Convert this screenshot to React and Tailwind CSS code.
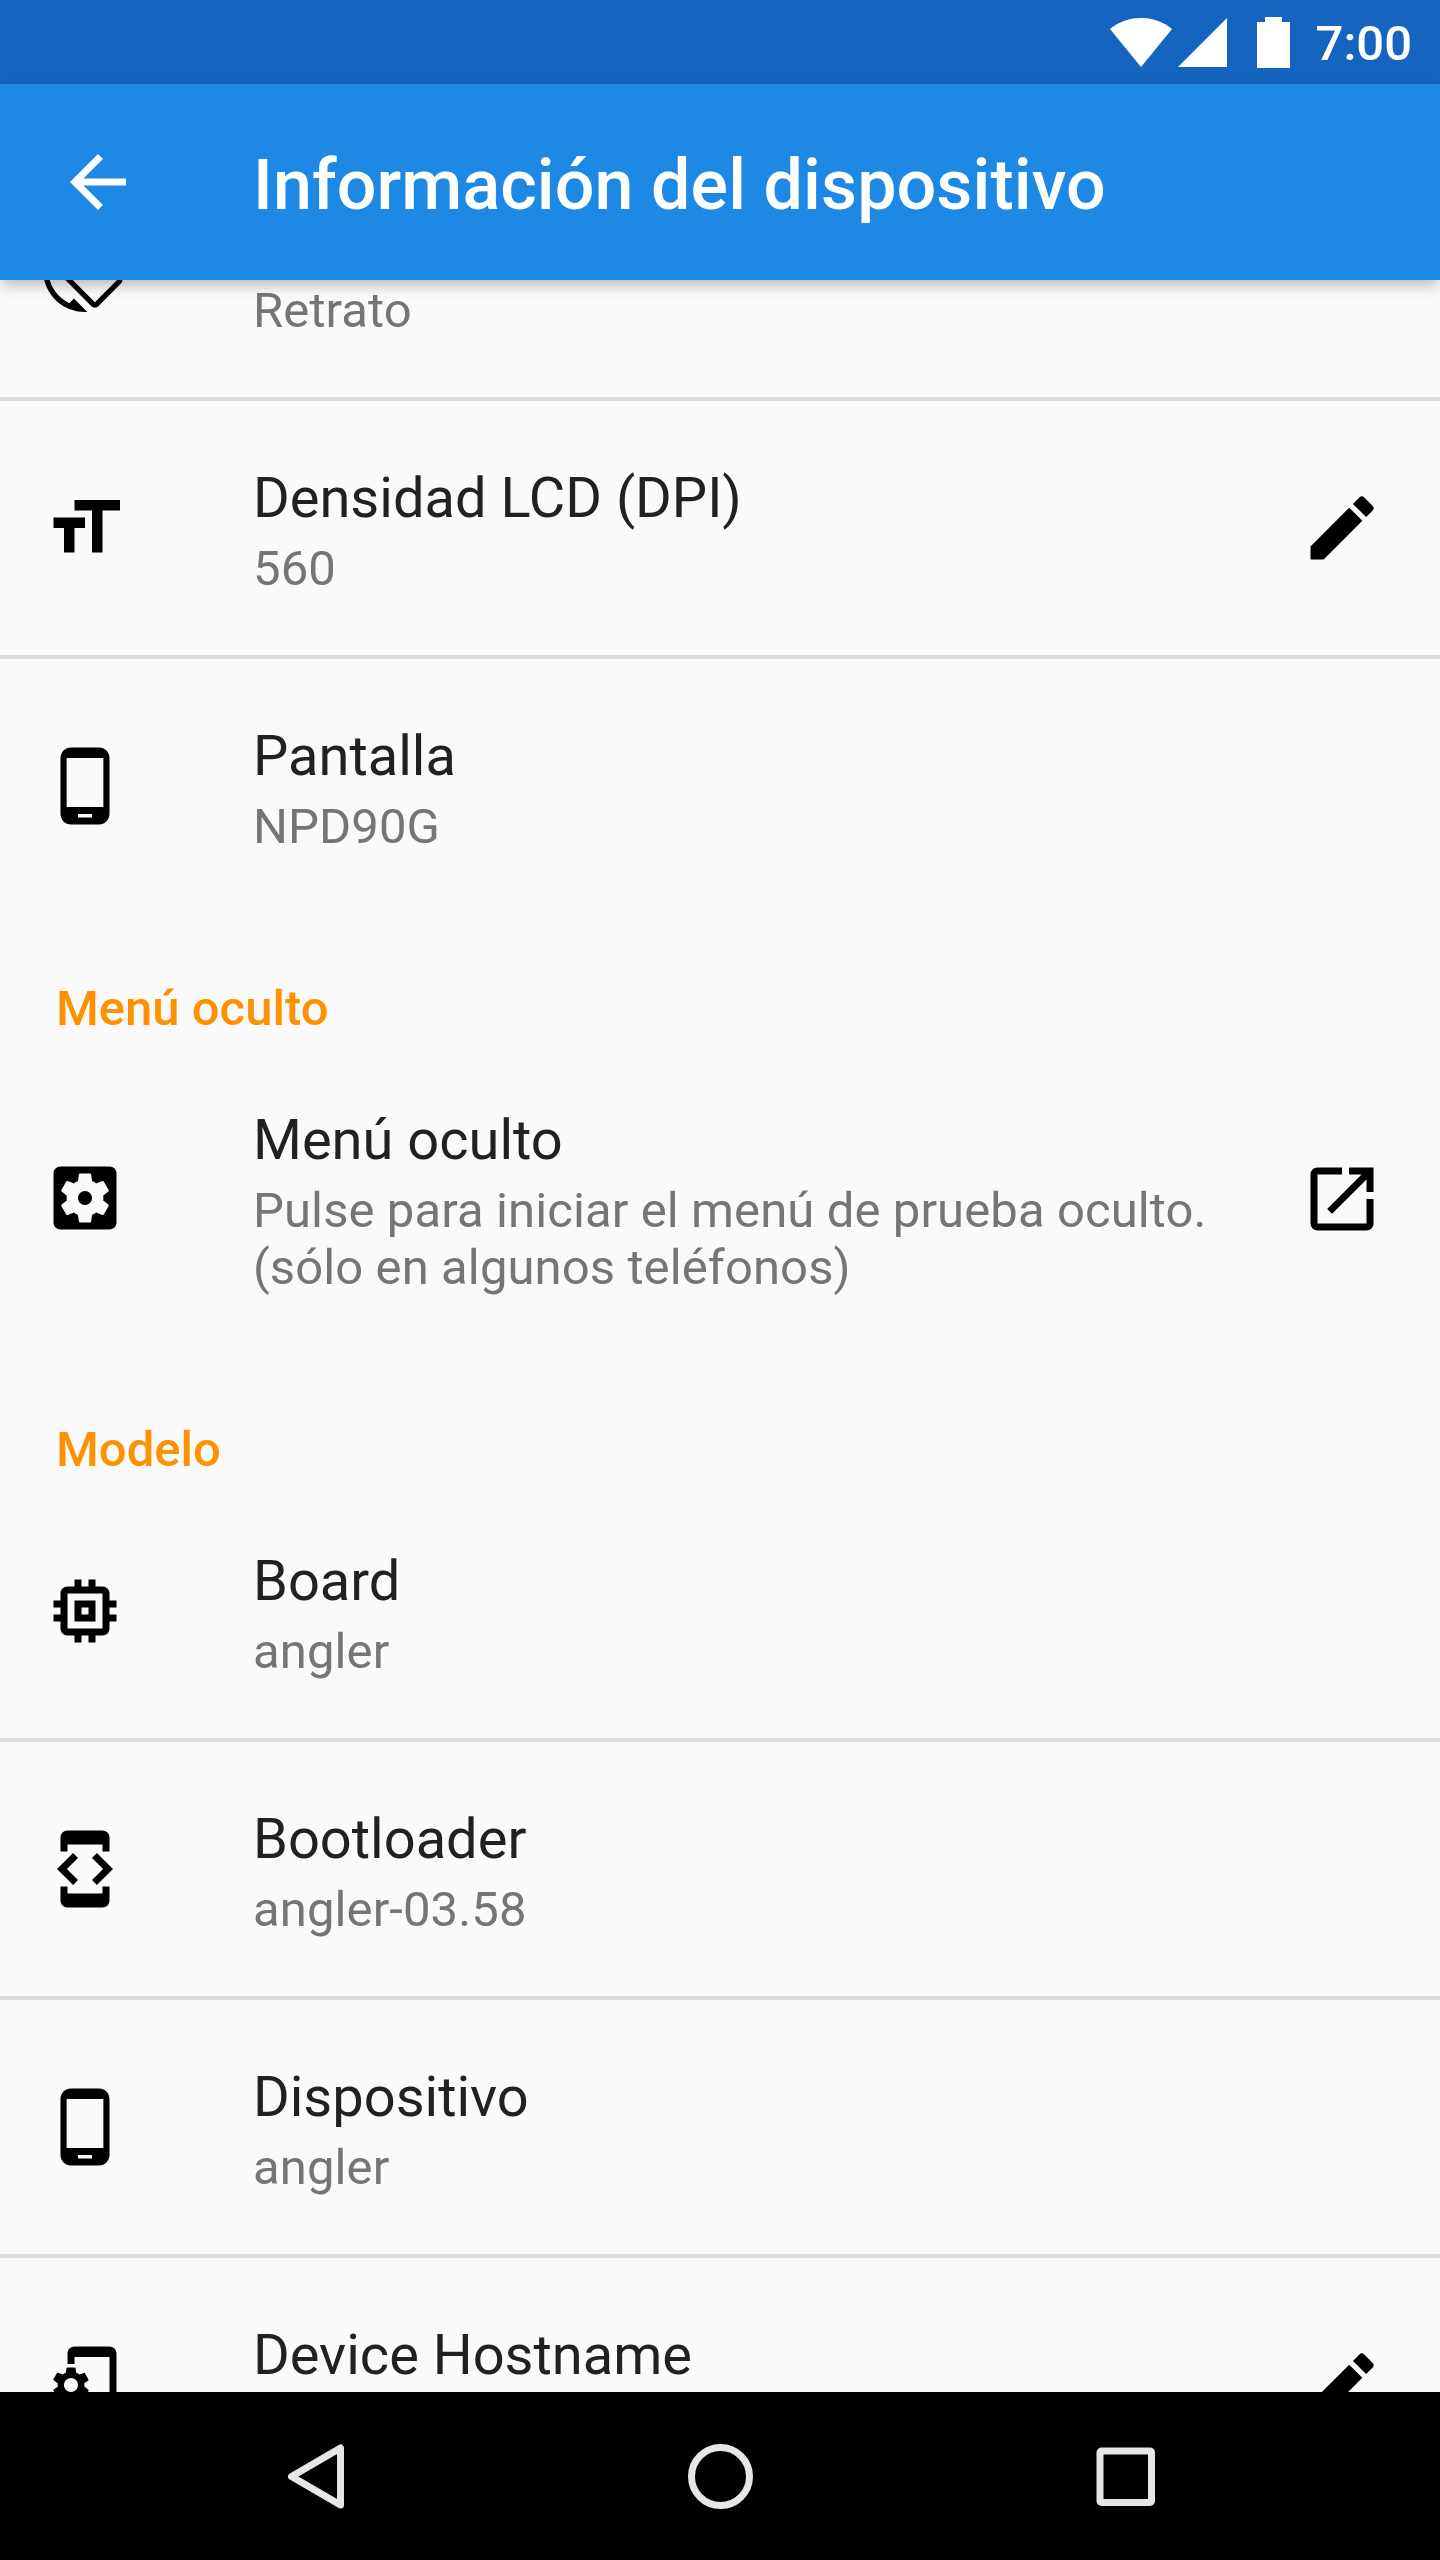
import {
  MdArrowBack,
  MdDeveloperMode,
  MdFormatSize,
  MdMemory,
  MdModeEdit,
  MdOpenInNew,
  MdPhoneAndroid,
  MdScreenRotation,
} from 'react-icons/md';

function SettingsTileIcon({ className }) {
  return (
    <svg viewBox="0 0.280 24 24" fill="currentColor" className={className}>
      <path d="M12 10c-1.1 0-2 .9-2 2s.9 2 2 2 2-.9 2-2-.9-2-2-2zm7-7H5c-1.11 0-2 .9-2 2v14c0 1.1.89 2 2 2h14c1.11 0 2-.9 2-2V5c0-1.1-.89-2-2-2zm-1.75 9c0 .23-.02.46-.05.68l1.48 1.16c.13.11.17.3.08.45l-1.4 2.42c-.09.15-.27.21-.43.15l-1.74-.7c-.36.28-.76.51-1.18.69l-.26 1.85c-.03.17-.18.3-.35.3h-2.8c-.17 0-.32-.13-.35-.29l-.26-1.85c-.43-.18-.82-.41-1.18-.69l-1.74.7c-.16.06-.34 0-.43-.15l-1.4-2.42c-.09-.15-.05-.34.08-.45l1.48-1.16c-.03-.23-.05-.46-.05-.69 0-.23.02-.46.05-.68l-1.48-1.16c-.13-.11-.17-.3-.08-.45l1.4-2.42c.09-.15.27-.21.43-.15l1.74.7c.36-.28.76-.51 1.18-.69l.26-1.85c.03-.17.18-.3.35-.3h2.8c.17 0 .32.13.35.29l.26 1.85c.43.18.82.41 1.18.69l1.74-.7c.16-.06.34 0 .43.15l1.4 2.42c.09.15.05.34-.08.45l-1.48 1.16c.03.23.05.46.05.69z" />
    </svg>
  );
}

function PhoneSetupIcon({ className }) {
  return (
    <svg viewBox="0 0 24 24" fill="currentColor" className={className}>
      <path d="M11.8 12.5v-1l1.1-.8c.1-.1.1-.2.1-.3l-1-1.7c-.1-.2-.2-.2-.3-.1l-1.3.4c-.3-.2-.6-.4-.9-.5l-.2-1.3c0-.1-.1-.2-.3-.2H7c-.1 0-.2.1-.3.2l-.2 1.3c-.3.1-.6.3-.9.5l-1.3-.5c-.1 0-.2 0-.3.1l-1 1.7c-.1.2 0 .3.1.4l1.1.8v1l-1.1.8c-.2 0-.2.1-.1.3l1 1.7c.1.2.2.2.3.1l1.4-.4c.3.2.6.4.9.5l.2 1.3c-.1.1.1.2.2.2h2c.1 0 .2-.1.3-.2l.2-1.3c.3-.1.6-.3.9-.5l1.3.5c.1 0 .2 0 .3-.1l1-1.7c.1-.2 0-.3-.1-.4l-1.1-.9zM8 14c-1.1 0-2-.9-2-2s.9-2 2-2 2 .9 2 2-.9 2-2 2zM19 1H9c-1.1 0-2 .9-2 2v3h2V4h10v16H9v-2H7v3c0 1.1.9 2 2 2h10c1.1 0 2-.9 2-2V3c0-1.1-.9-2-2-2z" />
    </svg>
  );
}

const displayItems = [
  { title: '', lines: ['Retrato'], icon: MdScreenRotation },
  { title: 'Densidad LCD (DPI)', lines: ['560'], icon: MdFormatSize, action: MdModeEdit },
  { title: 'Pantalla', lines: ['NPD90G'], icon: MdPhoneAndroid },
];

const hiddenMenuItems = [
  {
    title: 'Menú oculto',
    lines: ['Pulse para iniciar el menú de prueba oculto.', '(sólo en algunos teléfonos)'],
    icon: SettingsTileIcon,
    action: MdOpenInNew,
  },
];

const modelItems = [
  { title: 'Board', lines: ['angler'], icon: MdMemory },
  { title: 'Bootloader', lines: ['angler-03.58'], icon: MdDeveloperMode },
  { title: 'Dispositivo', lines: ['angler'], icon: MdPhoneAndroid },
  { title: 'Device Hostname', lines: [], icon: PhoneSetupIcon, action: MdModeEdit },
];

function StatusBar() {
  return (
    <div className="flex h-[84px] shrink-0 items-center justify-end bg-[#1565c0] pr-[28px] text-white">
      <svg viewBox="0 0 62 49" className="h-[49px] w-[62px]" fill="currentColor">
        <path d="M0 11C18-3.700 44-3.700 62 11L31 49z" />
      </svg>
      <svg viewBox="0 0 49 49" className="ml-[6px] h-[49px] w-[49px]" fill="currentColor">
        <path d="M0 49H49V0z" />
      </svg>
      <svg viewBox="0 0 33 51" className="ml-[30px] h-[51px] w-[33px]" fill="currentColor">
        <path d="M8 0h17v5h8v46H0V5h8z" />
      </svg>
      <span className="ml-[26px] pt-[4px] text-[49px] leading-[58px] font-medium">7:00</span>
    </div>
  );
}

function AppBar() {
  return (
    <header className="z-10 flex h-[196px] shrink-0 items-center bg-[#1e88e5] text-white shadow-[0_6px_14px_-2px_rgba(0,0,0,0.3)]">
      <div className="w-[253px] shrink-0 pl-[56px]">
        <MdArrowBack className="h-[84px] w-[84px]" />
      </div>
      <h1 className="pt-[6px] text-[70px] leading-[82px] font-medium tracking-[0.08px] whitespace-nowrap">
        Información del dispositivo
      </h1>
    </header>
  );
}

function SectionTitle({ children }) {
  return (
    <h2 className="flex h-[130px] items-end px-[56px] pb-[6px] text-[49px] leading-[57px] font-medium text-[#ff9100]">
      {children}
    </h2>
  );
}

function Item({ item }) {
  const Icon = item.icon;
  const Action = item.action;

  return (
    <li className="flex items-center pr-[56px]">
      <div className="w-[253px] shrink-0 pl-[43px]">
        <Icon className="h-[84px] w-[84px] text-black" />
      </div>
      <div className="min-h-[254px] flex-1 pt-[64px] pb-[58px]">
        <p className="h-[67px] text-[56px] leading-[67px] text-[#212121]">{item.title}</p>
        <div className="mt-[8px] text-[49px] leading-[57px] tracking-[0.1px] whitespace-nowrap text-[#757575]">
          {item.lines.map((line) => (
            <p key={line}>{line}</p>
          ))}
        </div>
      </div>
      {Action ? <Action className="h-[84px] w-[84px] shrink-0 text-black" /> : null}
    </li>
  );
}

function ItemList({ items }) {
  return (
    <ul className="divide-y-4 divide-[#dcdcdc]">
      {items.map((item) => (
        <Item key={item.title} item={item} />
      ))}
    </ul>
  );
}

function NavBar() {
  return (
    <nav className="flex h-[168px] shrink-0 items-center justify-center gap-[321px] bg-black text-[#e6e6e6]">
      <svg viewBox="0 0 84 84" className="h-[84px] w-[84px]" fill="none" stroke="currentColor">
        <path d="M67.500 14V71L18.500 42.500z" strokeWidth="7" strokeLinejoin="round" />
      </svg>
      <svg viewBox="0 0 84 84" className="h-[84px] w-[84px]" fill="none" stroke="currentColor">
        <circle cx="42.500" cy="42.500" r="29" strokeWidth="7" />
      </svg>
      <svg viewBox="0 0 84 84" className="h-[84px] w-[84px]" fill="none" stroke="currentColor">
        <rect x="17" y="17" width="51.500" height="51.500" rx="1.500" strokeWidth="7" />
      </svg>
    </nav>
  );
}

export default function App() {
  return (
    <div className="flex h-[2560px] w-[1440px] flex-col overflow-hidden bg-[#fafafa] font-['Roboto',sans-serif]">
      <StatusBar />
      <AppBar />
      <main className="min-h-0 flex-1 overflow-hidden">
        {/* list is scrolled so the first row sits partly under the app bar */}
        <div className="-mt-[137px]">
          <ItemList items={displayItems} />
          <SectionTitle>Menú oculto</SectionTitle>
          <ItemList items={hiddenMenuItems} />
          <SectionTitle>Modelo</SectionTitle>
          <ItemList items={modelItems} />
        </div>
      </main>
      <NavBar />
    </div>
  );
}
